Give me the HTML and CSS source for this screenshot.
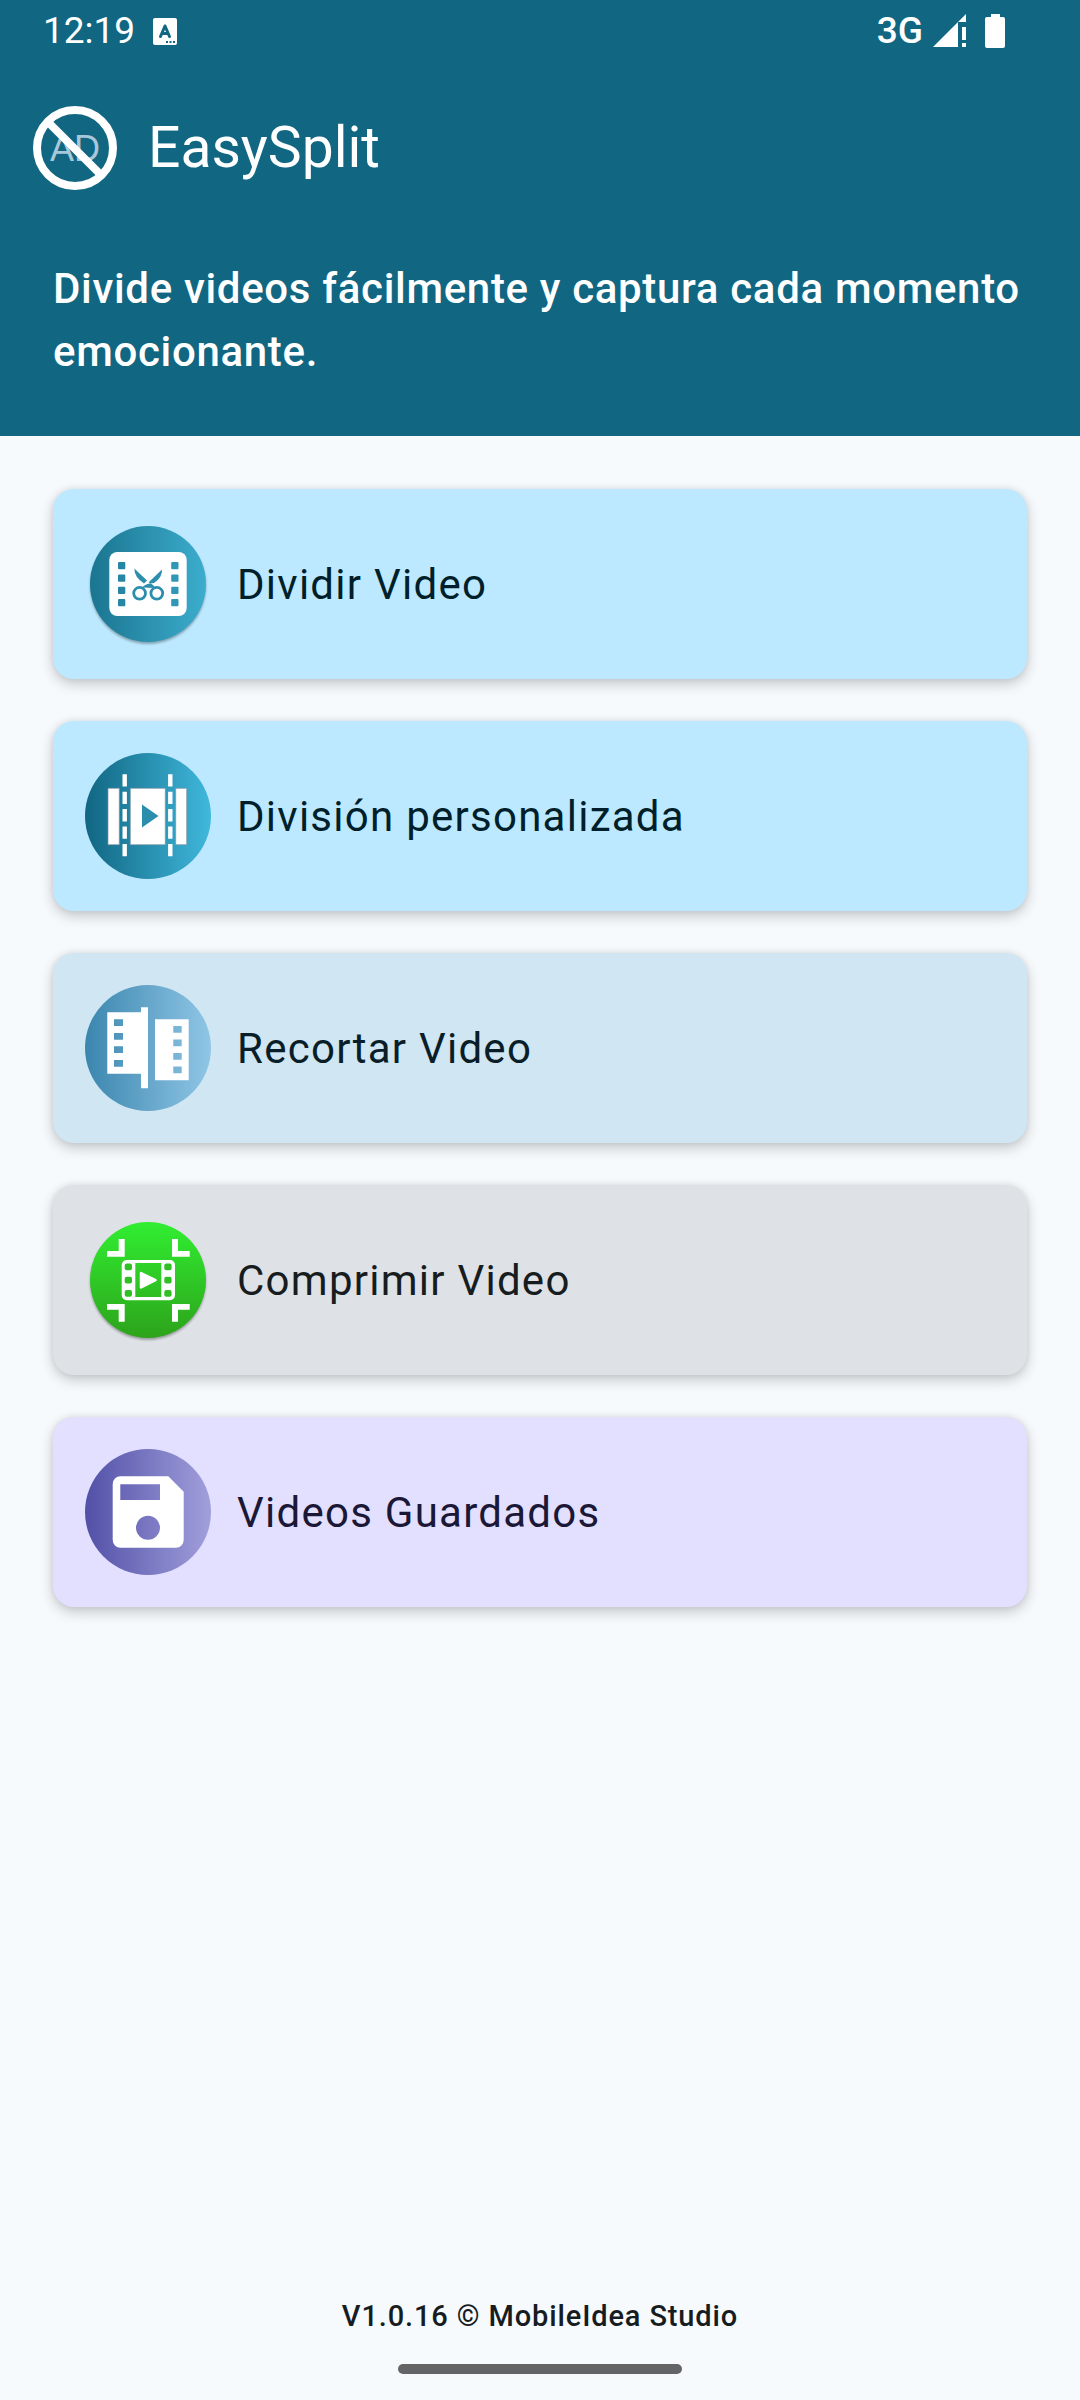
FILE: index.html
```html
<!DOCTYPE html>
<html lang="es">
<head>
<meta charset="utf-8">
<meta name="viewport" content="width=device-width, initial-scale=1">
<title>EasySplit</title>
<link rel="stylesheet" href="styles.css">
</head>
<body>
<div class="app">
  <header class="header">
    <div class="status">
      <div class="status-group">
        <span class="clock">12:19</span>
        <svg class="status-app" viewBox="0 0 24 27" aria-hidden="true">
          <rect width="24" height="27" rx="2" fill="#fff"/>
          <path d="M7.500 18.500L12 8L16.500 18.500M9 15.500H15" fill="none" stroke="#116682" stroke-width="3" stroke-linecap="round" stroke-linejoin="round"/>
          <path d="M13 23h2v2h-2zM16.500 23h2v2h-2zM20 23h2v2h-2z" fill="#116682"/>
        </svg>
      </div>
      <div class="status-group status-right">
        <span class="network">3G</span>
        <svg class="signal" viewBox="0 0 34 34" aria-hidden="true">
          <path d="M33 0V8H25V33H0zM29 13h4v13h-4zM29 29h4v4h-4z" fill="#fff"/>
        </svg>
        <svg class="battery" viewBox="0 0 20 34" aria-hidden="true">
          <path d="M6 0h9v3h3a2 2 0 0 1 2 2v27a2 2 0 0 1-2 2H2a2 2 0 0 1-2-2V5a2 2 0 0 1 2-2h4z" fill="#fff"/>
        </svg>
      </div>
    </div>
    <div class="toolbar">
      <button class="no-ads" type="button" aria-label="Quitar anuncios">
        <svg viewBox="0 0 84 84" aria-hidden="true">
          <text class="ad-text" x="42" y="55" text-anchor="middle">AD</text>
          <circle cx="42" cy="42" r="38" fill="none" stroke="#fff" stroke-width="8"/>
          <path d="M16 17L67 68" stroke="#fff" stroke-width="8"/>
        </svg>
      </button>
      <h1 class="title">EasySplit</h1>
    </div>
    <p class="tagline">Divide videos fácilmente y captura cada momento emocionante.</p>
  </header>

  <main class="menu">
    <button class="card card-split" type="button">
      <svg class="card-icon" viewBox="0 0 126 126" aria-hidden="true">
        <defs><linearGradient id="g-split"><stop offset="0" stop-color="#1a7590"/><stop offset="1" stop-color="#3cadcd"/></linearGradient></defs>
        <circle class="disc-shadow" cx="63" cy="63" r="58" fill="url(#g-split)"/>
        <rect x="24.300" y="31" width="77.400" height="64" rx="8" fill="#fff"/>
        <g fill="#2686a4">
          <rect x="33" y="41" width="7.300" height="7.300" rx="1"/><rect x="33" y="53.500" width="7.300" height="7.300" rx="1"/><rect x="33" y="65.700" width="7.300" height="7.300" rx="1"/><rect x="33" y="78" width="7.300" height="7.300" rx="1"/>
        </g>
        <g fill="#3097b6">
          <rect x="86.200" y="41" width="7.300" height="7.300" rx="1"/><rect x="86.200" y="53.500" width="7.300" height="7.300" rx="1"/><rect x="86.200" y="65.700" width="7.300" height="7.300" rx="1"/><rect x="86.200" y="78" width="7.300" height="7.300" rx="1"/>
        </g>
        <g fill="#2b8eac">
          <path d="M49.300 47.500L62 59.500L59 62.500Q49.500 56.500 49.300 47.500z"/>
          <path d="M77 48.500Q77.500 56.500 69 62L64.500 62.500Q63.500 61.500 64.500 60.500z"/>
          <path d="M57 66.500Q61 62.500 66 62.500Q69 64 70 67z"/>
        </g>
        <g fill="none" stroke="#2b8eac" stroke-width="2.800"><circle cx="54.600" cy="72.300" r="5.900"/><circle cx="71.800" cy="72.300" r="5.900"/></g>
      </svg>
      <span>Dividir Video</span>
    </button>

    <button class="card card-custom" type="button">
      <svg class="card-icon" viewBox="0 0 126 126" aria-hidden="true">
        <defs><linearGradient id="g-custom"><stop offset="0" stop-color="#116682"/><stop offset="1" stop-color="#40b8dc"/></linearGradient></defs>
        <circle cx="63" cy="63" r="63" fill="url(#g-custom)"/>
        <path d="M23 35.300h11.300v56.400H23zM45.300 35.300h35v56.400h-35zM90.700 35.300h11v56.400h-11z" fill="#fff" stroke="#7a93a3" stroke-width=".7"/>
        <path d="M39.700 21.300v83M85.300 21.300v83" stroke="#fff" stroke-width="4.400" stroke-dasharray="12.300 5.100" fill="none"/>
        <path d="M57 51.500L73.500 63L57 74.500z" fill="#2a8eac"/>
      </svg>
      <span>División personalizada</span>
    </button>

    <button class="card card-trim" type="button">
      <svg class="card-icon" viewBox="0 0 126 126" aria-hidden="true">
        <defs><linearGradient id="g-trim"><stop offset="0" stop-color="#3b86ae"/><stop offset="1" stop-color="#90c6e6"/></linearGradient></defs>
        <circle cx="63" cy="63" r="63" fill="url(#g-trim)"/>
        <path fill="#fff" fill-rule="evenodd" d="M22.300 27.300H56v-5h7v81h-7V88.700H22.300zM29 34.300v6.700h9v-6.700zM29 48v6.700h9V48zM29 61.300v6.700h9v-6.700zM29 75v6.700h9V75zM70 34.300h33.700v61H70zM88.300 41v6.700h8.400V41zM88.300 54.500v6.700h8.400v-6.700zM88.300 68v6.700h8.400V68zM88.300 81.600v6.700h8.400v-6.700z"/>
      </svg>
      <span>Recortar Video</span>
    </button>

    <button class="card card-compress" type="button">
      <svg class="card-icon" viewBox="0 0 126 126" aria-hidden="true">
        <defs><linearGradient id="g-compress" x2="0" y2="1"><stop offset="0" stop-color="#31ee31"/><stop offset="1" stop-color="#2da31b"/></linearGradient></defs>
        <circle class="disc-shadow" cx="63" cy="63" r="58" fill="url(#g-compress)"/>
        <path fill="#fff" d="M33.700 22h6v17.700H22V34h11.700zM87 22h6v12h11.700v5.700H87zM22 87h17.700v17.700h-6V92.700H22zM87 87h17.700v5.700H93v12h-6z"/>
        <path fill="#fff" fill-rule="evenodd" d="M41.700 43H85a5 5 0 0 1 5 5v30.300a5 5 0 0 1-5 5H41.700a5 5 0 0 1-5-5V48a5 5 0 0 1 5-5zM50.300 46v34h26V46z"/>
        <g fill="#2fc124">
          <rect x="39.700" y="46.500" width="7.300" height="6.800" rx="2"/><rect x="39.700" y="59.700" width="7.300" height="6.800" rx="2"/><rect x="39.700" y="73" width="7.300" height="6.800" rx="2"/>
          <rect x="79.300" y="46.500" width="7.300" height="6.800" rx="2"/><rect x="79.300" y="59.700" width="7.300" height="6.800" rx="2"/><rect x="79.300" y="73" width="7.300" height="6.800" rx="2"/>
        </g>
        <path d="M56 56L70.500 63.200L56 70.500z" fill="#fff" stroke="#fff" stroke-width="2.500" stroke-linejoin="round"/>
      </svg>
      <span>Comprimir Video</span>
    </button>

    <button class="card card-saved" type="button">
      <svg class="card-icon" viewBox="0 0 126 126" aria-hidden="true">
        <defs><linearGradient id="g-saved"><stop offset="0" stop-color="#5250a7"/><stop offset="1" stop-color="#a19fdb"/></linearGradient></defs>
        <circle cx="63" cy="63" r="63" fill="url(#g-saved)"/>
        <path fill="#fff" fill-rule="evenodd" d="M83.300 27.300L98.700 42.700V91a7.700 7.700 0 0 1-7.700 7.700H35.300a7.700 7.700 0 0 1-7.600-7.700V35a7.700 7.700 0 0 1 7.600-7.700zM35.300 35.300v15.700H75V35.300zM63 66.700a12 12 0 1 0 0 24a12 12 0 1 0 0-24z"/>
      </svg>
      <span>Videos Guardados</span>
    </button>
  </main>

  <footer class="footer">
    <p class="version">V1.0.16 © MobileIdea Studio</p>
    <div class="gesture-bar"></div>
  </footer>
</div>
</body>
</html>
```
FILE: styles.css
```css
* { box-sizing: border-box; }

body {
  margin: 0;
  background: #f6fafd;
  color: #171c1f;
  font-family: Roboto, "Liberation Sans", sans-serif;
}

.app {
  display: flex;
  flex-direction: column;
  min-height: 100vh;
}

.header {
  background: #116682;
  color: #fff;
  padding-bottom: 53px;
}

.status {
  display: flex;
  justify-content: space-between;
  align-items: center;
  height: 62px;
  padding: 0 75px 0 43px;
}

.status-group { display: flex; align-items: center; gap: 18px; }
.status-right { gap: 10px; }

.clock, .network { font-size: 37px; line-height: 44px; }
.network { font-weight: 500; }

.status-app { width: 24px; height: 27px; }
.signal { width: 34px; height: 34px; }
.battery { width: 20px; height: 34px; margin-left: 8px; }

.toolbar {
  display: flex;
  align-items: center;
  gap: 31px;
  padding: 44px 33px;
}

.no-ads {
  width: 84px;
  height: 84px;
  padding: 0;
  border: 0;
  background: none;
}

.no-ads svg { display: block; width: 100%; height: 100%; }
.ad-text { font-size: 36px; font-weight: 500; fill: #a6c8d9; }

.title {
  margin: 0;
  font-size: 57px;
  line-height: 74px;
  font-weight: 400;
}

.tagline {
  margin: 0;
  padding: 23px 53px 0;
  font-size: 42px;
  line-height: 63px;
  font-weight: 500;
  letter-spacing: 0.016em;
}

.menu {
  display: flex;
  flex-direction: column;
  gap: 42px;
  padding: 53px;
}

.card {
  display: flex;
  align-items: center;
  gap: 26px;
  padding: 32px;
  border: 0;
  border-radius: 21px;
  box-shadow: 0 5px 14px rgba(0, 0, 0, 0.2), 0 0 6px rgba(0, 0, 0, 0.08);
  font: 400 42px/63px Roboto, "Liberation Sans", sans-serif;
  letter-spacing: 0.03em;
  text-align: left;
}

.card-icon { display: block; width: 126px; height: 126px; }
.disc-shadow { filter: drop-shadow(0 2px 1px rgba(0, 0, 0, 0.3)); }

.card-split, .card-custom { background: #bce9ff; color: #001f2a; }
.card-trim { background: #d0e6f2; color: #091e28; }
.card-compress { background: #dee2e6; color: #171c1f; }
.card-saved { background: #e2dfff; color: #1a1836; }

.footer {
  display: flex;
  flex-direction: column;
  align-items: center;
  gap: 27px;
  margin-top: auto;
  padding-bottom: 26px;
}

.version {
  margin: 0;
  font-size: 29px;
  line-height: 42px;
  font-weight: 500;
  letter-spacing: 0.03em;
}

.gesture-bar {
  width: 284px;
  height: 10px;
  border-radius: 5px;
  background: #626466;
}
```
